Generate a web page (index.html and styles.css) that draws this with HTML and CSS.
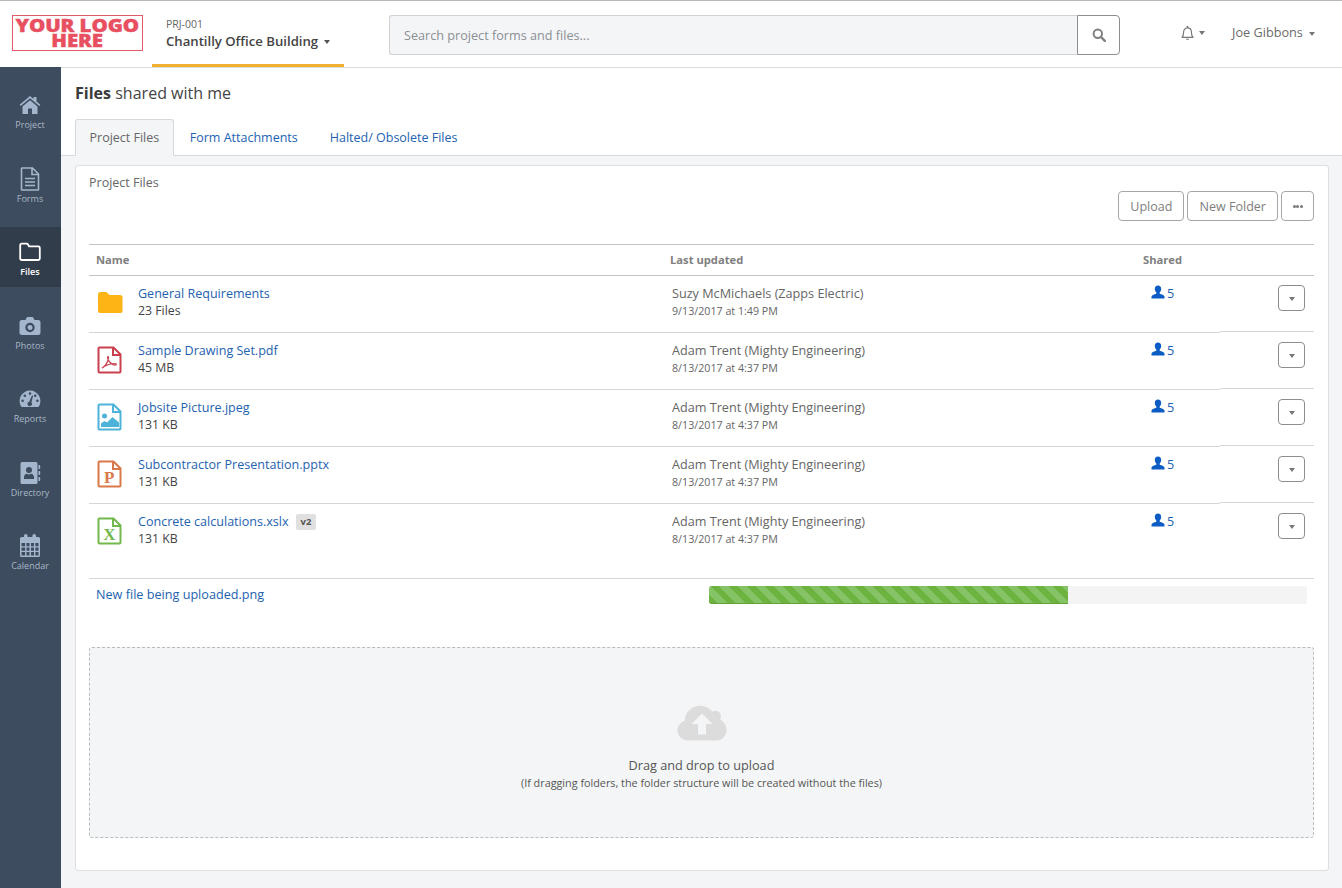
FILE: index.html
```html
<!DOCTYPE html>
<html lang="en">
<head>
<meta charset="utf-8">
<title>Files shared with me</title>
<link rel="stylesheet" href="styles.css">
</head>
<body>
<header class="topbar">
  <div class="logo"><div class="logo-text">YOUR LOGO<br>HERE</div></div>
  <div class="project">
    <div class="project-id">PRJ-001</div>
    <div class="project-name">Chantilly Office Building <i class="caret dark"></i></div>
  </div>
  <div class="search">
    <div class="search-input">Search project forms and files...</div>
    <div class="search-btn">
      <svg class="ic-search" viewBox="0 0 14 14"><circle cx="5.8" cy="5.8" r="4.2" fill="none" stroke="#808080" stroke-width="2"/><path d="M9 9l3.8 3.8" stroke="#808080" stroke-width="2.4" stroke-linecap="round"/></svg>
    </div>
  </div>
  <div class="bell">
    <svg class="ic-bell" viewBox="0 0 14 15"><path d="M1.800 11.600c.9-1 1.500-2.200 1.500-4.600 0-2.400 1.500-4.300 3.700-4.300s3.700 1.900 3.700 4.300c0 2.400.6 3.600 1.500 4.600z" fill="none" stroke="#777" stroke-width="1.100" stroke-linejoin="round"/><path d="M5.400 12.800a1.700 1.700 0 0 0 3.200 0z" fill="#777"/><circle cx="7" cy="1.700" r=".9" fill="#777"/></svg>
    <i class="caret"></i>
  </div>
  <div class="user">Joe Gibbons <i class="caret"></i></div>
</header>

<div class="app">
  <nav class="sidebar">
    <a class="nav-item">
      <svg class="nav-ic" viewBox="0 0 22 20"><path d="M11 1 .6 9.800l1.100 1.300L11 3.300l9.300 7.800 1.100-1.300L17.500 6.500V2h-3v2z"/><path d="M3.500 11.500 11 5.200l7.500 6.300V19h-5.500v-5.500H9V19H3.500z"/></svg>
      <span>Project</span>
    </a>
    <a class="nav-item">
      <svg class="nav-ic tall" viewBox="0 0 20 24"><path class="ln" d="M2 1h10.500L18.500 7v15.500a.5.500 0 0 1-.5.500H2a.5.500 0 0 1-.5-.5V1.500A.5.500 0 0 1 2 1zM12 1v6.500h6.500M5 11.500h10M5 15h10M5 18.500h10"/></svg>
      <span>Forms</span>
    </a>
    <a class="nav-item active">
      <svg class="nav-ic" viewBox="0 0 22 20"><path class="ln" d="M1.200 5V3.200a1.500 1.500 0 0 1 1.500-1.500h5a1.500 1.500 0 0 1 1.300.8l1 1.800h9.300a1.500 1.500 0 0 1 1.500 1.500v10.700a1.500 1.500 0 0 1-1.500 1.500H2.700a1.500 1.500 0 0 1-1.500-1.500z"/></svg>
      <span>Files</span>
    </a>
    <a class="nav-item">
      <svg class="nav-ic" viewBox="0 0 22 20"><path fill-rule="evenodd" d="M3 4h3.500l1.200-2.500a1 1 0 0 1 .9-.5h4.800a1 1 0 0 1 .9.500L15.500 4H19a2.500 2.500 0 0 1 2.500 2.500v10A2.500 2.500 0 0 1 19 19H3a2.500 2.500 0 0 1-2.500-2.500v-10A2.500 2.500 0 0 1 3 4zm8 2.800a4.700 4.700 0 1 0 0 9.400 4.700 4.700 0 0 0 0-9.400zm0 2.200a2.500 2.500 0 1 1 0 5 2.500 2.500 0 0 1 0-5z"/></svg>
      <span>Photos</span>
    </a>
    <a class="nav-item">
      <svg class="nav-ic" viewBox="0 0 22 20"><path fill-rule="evenodd" d="M11 1.500a10.500 10.500 0 0 1 9 15.800 1.200 1.200 0 0 1-1 .7H3a1.200 1.200 0 0 1-1-.7A10.500 10.500 0 0 1 11 1.500zM11 3.300a1.300 1.300 0 1 0 0 2.600 1.300 1.300 0 0 0 0-2.600zM5.800 5.500a1.300 1.300 0 1 0 0 2.600 1.300 1.300 0 0 0 0-2.600zM3.600 10.500a1.300 1.300 0 1 0 0 2.600 1.300 1.300 0 0 0 0-2.600zM18.400 10.500a1.300 1.300 0 1 0 0 2.600 1.300 1.300 0 0 0 0-2.600zM16.200 5.500a1.300 1.300 0 1 0 0 2.600 1.300 1.300 0 0 0 0-2.600zM13 6.500l-2.800 6.300a2.200 2.200 0 1 0 2.200.7l1.700-6.700z"/></svg>
      <span>Reports</span>
    </a>
    <a class="nav-item">
      <svg class="nav-ic tall" viewBox="0 0 22 24"><path fill-rule="evenodd" d="M3 1h14a1.500 1.500 0 0 1 1.500 1.500v19A1.500 1.500 0 0 1 17 23H3a1.500 1.500 0 0 1-1.500-1.500v-19A1.500 1.500 0 0 1 3 1zm7 5a3 3 0 1 0 0 6 3 3 0 0 0 0-6zm-5 12h10v-1.800c0-2-1.500-3.400-3-3.400-.7.400-1.300.600-2 .600s-1.300-.200-2-.600c-1.500 0-3 1.400-3 3.400z"/><path d="M19.500 4h1a.7.700 0 0 1 .7.700v2.600a.7.700 0 0 1-.7.700h-1zM19.500 10h1a.7.700 0 0 1 .7.700v2.600a.7.700 0 0 1-.7.700h-1zM19.500 16h1a.7.700 0 0 1 .7.700v2.600a.7.700 0 0 1-.7.700h-1z"/></svg>
      <span>Directory</span>
    </a>
    <a class="nav-item">
      <svg class="nav-ic tall" viewBox="0 0 22 24"><path fill-rule="evenodd" d="M2.500 3H5V1.800a1.800 1.800 0 0 1 3.600 0V3h4.800V1.800a1.800 1.800 0 0 1 3.600 0V3h2.500A1.500 1.500 0 0 1 21 4.500v17a1.500 1.500 0 0 1-1.500 1.500h-17A1.500 1.500 0 0 1 1 21.500v-17A1.500 1.500 0 0 1 2.500 3zM2.500 9v3.200h3.600V9zm5 0v3.200h3V9zm4.500 0v3.200h3V9zm4.400 0v3.200h3.100V9zM2.500 13.500v3.200h3.600v-3.200zm5 0v3.200h3v-3.200zm4.500 0v3.200h3v-3.200zm4.400 0v3.200h3.100v-3.200zM2.500 18v3.500h3.600V18zm5 0v3.500h3V18zm4.500 0v3.500h3V18zm4.400 0v3.500h3.100V18z"/></svg>
      <span>Calendar</span>
    </a>
  </nav>

  <main class="main">
    <div class="page-head">
      <h1 class="title"><b>Files</b> shared with me</h1>
      <div class="tabs">
        <a class="tab active">Project Files</a>
        <a class="tab">Form Attachments</a>
        <a class="tab">Halted/ Obsolete Files</a>
      </div>
    </div>
    <div class="content">
      <section class="panel">
        <div class="panel-title">Project Files</div>
        <div class="toolbar">
          <button class="btn">Upload</button>
          <button class="btn">New Folder</button>
          <button class="btn btn-more"><i></i><i></i><i></i></button>
        </div>

        <div class="row head">
          <div class="c-name">Name</div>
          <div class="c-upd">Last updated</div>
          <div class="c-shared">Shared</div>
          <div class="c-act"></div>
        </div>

        <div class="row">
          <div class="c-name">
            <svg class="f-ic" viewBox="0 0 26 28"><path fill="#fdb515" d="M1 5.500A2.500 2.500 0 0 1 3.500 3h6l3 3H23a2.500 2.500 0 0 1 2.500 2.500V22a2 2 0 0 1-2 2H3a2 2 0 0 1-2-2z"/></svg>
            <div><a class="link">General Requirements</a><div class="sub">23 Files</div></div>
          </div>
          <div class="c-upd"><div class="who">Suzy McMichaels (Zapps Electric)</div><div class="when">9/13/2017 at 1:49 PM</div></div>
          <div class="c-shared"><a class="share"><svg class="ic-user" viewBox="0 0 14 14"><path d="M7 .5c2 0 3.200 1.500 3.200 3.500 0 1.500-.7 2.800-1.500 3.500v1.200c1.800.6 4.300 1.500 4.800 2.700v2H.5v-2c.5-1.200 3-2.100 4.800-2.700V7.500C4.500 6.800 3.800 5.500 3.800 4 3.800 2 5 .5 7 .5z"/></svg>5</a></div>
          <div class="c-act"><button class="btn-drop"><i class="caret"></i></button></div>
        </div>

        <div class="row">
          <div class="c-name">
            <svg class="f-ic" viewBox="0 0 26 28"><path d="M2.500 1.500h14l7 7v17a1 1 0 0 1-1 1h-20a1 1 0 0 1-1-1v-23a1 1 0 0 1 1-1zM16 1.500V9h7.500" fill="none" stroke="#c9404f" stroke-width="2"/><path d="M5 22c3-1.500 5.500-5.500 6.500-9.500.3-1.300-.3-2.200-.8-1.800-.6.500 0 3 2 5.300 2 2.300 4.500 3.300 6 3 1.200-.3.700-1.500-.8-1.500-3 0-7.500 1-10.500 2.800-1.700 1-2.600 1.900-1.900 1.700z" fill="none" stroke="#c9404f" stroke-width="1.200"/></svg>
            <div><a class="link">Sample Drawing Set.pdf</a><div class="sub">45 MB</div></div>
          </div>
          <div class="c-upd"><div class="who">Adam Trent (Mighty Engineering)</div><div class="when">8/13/2017 at 4:37 PM</div></div>
          <div class="c-shared"><a class="share"><svg class="ic-user" viewBox="0 0 14 14"><path d="M7 .5c2 0 3.200 1.500 3.200 3.500 0 1.500-.7 2.800-1.500 3.500v1.200c1.800.6 4.300 1.500 4.800 2.700v2H.5v-2c.5-1.200 3-2.100 4.800-2.700V7.500C4.500 6.800 3.800 5.500 3.800 4 3.800 2 5 .5 7 .5z"/></svg>5</a></div>
          <div class="c-act"><button class="btn-drop"><i class="caret"></i></button></div>
        </div>

        <div class="row">
          <div class="c-name">
            <svg class="f-ic" viewBox="0 0 26 28"><path d="M2.500 1.500h14l7 7v17a1 1 0 0 1-1 1h-20a1 1 0 0 1-1-1v-23a1 1 0 0 1 1-1zM16 1.500V9h7.500" fill="none" stroke="#4eb3d8" stroke-width="2"/><circle cx="7.500" cy="13" r="2.500" fill="#4eb3d8"/><path d="M4 24v-3.500l3.500-2.500 2.500 1.500 5.500-5.500 6.500 5.500V24z" fill="#4eb3d8"/></svg>
            <div><a class="link">Jobsite Picture.jpeg</a><div class="sub">131 KB</div></div>
          </div>
          <div class="c-upd"><div class="who">Adam Trent (Mighty Engineering)</div><div class="when">8/13/2017 at 4:37 PM</div></div>
          <div class="c-shared"><a class="share"><svg class="ic-user" viewBox="0 0 14 14"><path d="M7 .5c2 0 3.200 1.500 3.200 3.500 0 1.500-.7 2.800-1.500 3.500v1.200c1.800.6 4.300 1.500 4.800 2.700v2H.5v-2c.5-1.200 3-2.100 4.800-2.700V7.500C4.500 6.800 3.800 5.500 3.800 4 3.800 2 5 .5 7 .5z"/></svg>5</a></div>
          <div class="c-act"><button class="btn-drop"><i class="caret"></i></button></div>
        </div>

        <div class="row">
          <div class="c-name">
            <svg class="f-ic" viewBox="0 0 26 28"><path d="M2.500 1.500h14l7 7v17a1 1 0 0 1-1 1h-20a1 1 0 0 1-1-1v-23a1 1 0 0 1 1-1zM16 1.500V9h7.500" fill="none" stroke="#d9794a" stroke-width="2"/><text x="12.300" y="23" class="f-letter" fill="#d9794a">P</text></svg>
            <div><a class="link">Subcontractor Presentation.pptx</a><div class="sub">131 KB</div></div>
          </div>
          <div class="c-upd"><div class="who">Adam Trent (Mighty Engineering)</div><div class="when">8/13/2017 at 4:37 PM</div></div>
          <div class="c-shared"><a class="share"><svg class="ic-user" viewBox="0 0 14 14"><path d="M7 .5c2 0 3.200 1.500 3.200 3.500 0 1.500-.7 2.800-1.500 3.500v1.200c1.800.6 4.300 1.500 4.800 2.700v2H.5v-2c.5-1.200 3-2.100 4.800-2.700V7.500C4.500 6.800 3.800 5.500 3.800 4 3.800 2 5 .5 7 .5z"/></svg>5</a></div>
          <div class="c-act"><button class="btn-drop"><i class="caret"></i></button></div>
        </div>

        <div class="row last">
          <div class="c-name">
            <svg class="f-ic" viewBox="0 0 26 28"><path d="M2.500 1.500h14l7 7v17a1 1 0 0 1-1 1h-20a1 1 0 0 1-1-1v-23a1 1 0 0 1 1-1zM16 1.500V9h7.500" fill="none" stroke="#72b84c" stroke-width="2"/><text x="12.300" y="23" class="f-letter" fill="#72b84c">X</text></svg>
            <div><a class="link">Concrete calculations.xslx</a><span class="badge">v2</span><div class="sub">131 KB</div></div>
          </div>
          <div class="c-upd"><div class="who">Adam Trent (Mighty Engineering)</div><div class="when">8/13/2017 at 4:37 PM</div></div>
          <div class="c-shared"><a class="share"><svg class="ic-user" viewBox="0 0 14 14"><path d="M7 .5c2 0 3.200 1.500 3.200 3.500 0 1.500-.7 2.800-1.500 3.500v1.200c1.800.6 4.300 1.500 4.800 2.700v2H.5v-2c.5-1.200 3-2.100 4.800-2.700V7.500C4.500 6.800 3.800 5.500 3.800 4 3.800 2 5 .5 7 .5z"/></svg>5</a></div>
          <div class="c-act"><button class="btn-drop"><i class="caret"></i></button></div>
        </div>

        <div class="upload-row">
          <a class="link upload-link">New file being uploaded.png</a>
          <div class="progress"><div class="progress-fill" style="width:60%"></div></div>
        </div>

        <div class="dropzone">
          <svg class="ic-cloud" viewBox="0 0 50 36"><path fill-rule="evenodd" d="M11 35.500C5 35.500.5 31 .5 25.500c0-4.500 3-8.500 7.300-9.800C8 7 15 .8 23 .8c5 0 9.500 2.300 12.300 6 .9-.7 2-1 3.200-1 3 0 5.500 2.500 5.500 5.500 0 1.200-.4 2.300-1 3.200 3.900 1.800 6.500 6 6.500 10.500 0 5.800-4.500 10.500-10 10.500zM25 8.500 14.500 19h6.500v10.500h8V19h6.500z"/></svg>
          <div class="drop-main">Drag and drop to upload</div>
          <div class="drop-sub">(If dragging folders, the folder structure will be created without the files)</div>
        </div>
      </section>
    </div>
  </main>
</div>
</body>
</html>
```

FILE: styles.css
```css
* { box-sizing: border-box; }
html, body { margin: 0; padding: 0; }
body {
  width: 1342px;
  height: 888px;
  overflow: hidden;
  font-family: "Open Sans", sans-serif;
  font-size: 12.65px;
  color: #444;
  background: #fff;
}
.caret {
  display: inline-block;
  width: 0;
  height: 0;
  border-left: 3.5px solid transparent;
  border-right: 3.5px solid transparent;
  border-top: 4px solid #777;
  vertical-align: middle;
}
.caret.dark { border-top-color: #555; margin-left: 2px; }

/* top bar */
.topbar {
  height: 67px;
  border-top: 1px solid #b8b8b8;
  display: flex;
  align-items: flex-start;
  background: #fff;
}
.logo {
  width: 131px;
  height: 36px;
  margin: 14px 0 0 12px;
  border: 1px solid #e2596a;
  color: #e84f60;
  display: flex;
  align-items: center;
  justify-content: center;
}
.logo-text {
  font-family: "Open Sans", sans-serif;
  font-weight: 800;
  font-size: 18px;
  line-height: 15.5px;
  letter-spacing: -.1px;
  text-align: center;
  white-space: nowrap;
  transform: scaleX(1.14);
  -webkit-text-stroke: .4px #e84f60;
}
.project {
  width: 192px;
  height: 66px;
  margin-left: 9px;
  padding: 15px 0 0 14px;
  border-bottom: 3px solid #f0b02e;
}
.project-id { font-size: 10.5px; line-height: 16px; color: #666; }
.project-name { font-size: 13.15px; line-height: 18px; font-weight: 600; color: #444; }
.search { display: flex; width: 731px; height: 40px; margin: 14px 0 0 45px; }
.search-input {
  flex: 1;
  background: #f4f5f7;
  border: 1px solid #d0d2d5;
  border-right: 0;
  border-radius: 3px 0 0 3px;
  padding-left: 14px;
  font-size: 12.65px;
  line-height: 39px;
  color: #8b8f94;
}
.search-btn {
  width: 43px;
  border: 1px solid #8d8d8d;
  border-radius: 0 4px 4px 0;
  display: flex;
  align-items: center;
  justify-content: center;
}
.ic-search { width: 14px; height: 14px; }
.bell { display: flex; align-items: center; gap: 4px; margin: 23px 0 0 60px; height: 17px; }
.ic-bell { width: 15px; height: 16px; }
.user { margin: 23px 0 0 27px; font-size: 12.7px; line-height: 17px; color: #6b6b6b; }
.user .caret { margin-left: 3px; }

/* layout */
.app { display: flex; height: 821px; }
.sidebar {
  width: 61px;
  flex: none;
  background: #3d4c5e;
  padding: 13px 1px 0 0;
  display: flex;
  flex-direction: column;
  gap: 13.5px;
}
.nav-item {
  height: 60px;
  display: flex;
  flex-direction: column;
  align-items: center;
  padding-top: 15px;
  color: #a9b7c7;
  font-size: 9px;
  line-height: 14px;
}
.nav-item span { margin-top: auto; margin-bottom: 8px; }
.nav-ic { width: 22px; height: 20px; fill: #a3b6cc; }
.nav-ic.tall { height: 24px; margin-top: -2px; }
.nav-ic .ln { fill: none; stroke: #a3b6cc; stroke-width: 1.600; }
.nav-item.active { background: #323d4c; color: #fff; font-weight: 600; position: relative; }
.nav-item.active::after { content: ""; position: absolute; top: 0; bottom: 0; right: -1px; width: 1px; background: #323d4c; }
.nav-item.active .ln { stroke: #fff; stroke-width: 1.800; }
.main { flex: 1; display: flex; flex-direction: column; min-width: 0; }
.page-head { height: 89px; border-top: 1px solid #dcdcdc; border-bottom: 1px solid #d6d8da; padding: 0 0 0 14px; display: flex; flex-direction: column; }
.title { margin: 14px 0 0; font-size: 16.05px; line-height: 22px; font-weight: 400; color: #444; }
.title b { font-weight: 700; color: #3a3a3a; }
.tabs { display: flex; margin-top: 15px; margin-bottom: -1px; }
.tab {
  height: 37px;
  padding: 0 15px;
  font-size: 12.5px;
  line-height: 35px;
  color: #1e62b0;
  border: 1px solid transparent;
}
.tab.active {
  color: #666;
  background: #f4f5f7;
  border-color: #d6d8da #d6d8da #f4f5f7;
  border-radius: 3px 3px 0 0;
  padding: 0 13.5px;
}
.content { flex: 1; background: #f4f5f7; padding: 9px 13px 18px 14px; }
.panel {
  height: 706px;
  background: #fff;
  border: 1px solid #dddfe2;
  border-radius: 3px;
  padding: 8px 14px 0 13px;
}
.panel-title { font-size: 12.5px; line-height: 18px; color: #666; }
.toolbar { display: flex; justify-content: flex-end; gap: 3px; margin-top: -1px; }
.btn {
  height: 30px;
  padding: 0 11px;
  font: 400 12.55px "Open Sans", sans-serif;
  color: #7e7e7e;
  background: #fff;
  border: 1px solid #a6a6a6;
  border-radius: 4px;
}
.btn-more { width: 33px; padding: 0; display: flex; align-items: center; justify-content: center; gap: .5px; }
.btn-more i { width: 3px; height: 3px; background: #777; border-radius: 50%; }

/* table */
.row { display: flex; height: 57px; }
.row > div { border-bottom: 1px solid #d6d6d6; }
.row.head { height: 32px; margin-top: 23px; border-top: 1px solid #c4c4c4; font-size: 11.2px; font-weight: 700; color: #808080; line-height: 30px; }
.row.head > div { border-bottom-color: #c4c4c4; }
.row.last > div { border-bottom: 0; }
.c-name { width: 581px; display: flex; align-items: flex-start; padding-left: 8px; }
.c-upd { width: 473px; padding-left: 2px; }
.c-shared { width: 77px; padding-left: 8px; }
.c-act { flex: 1; display: flex; justify-content: flex-end; padding-right: 9px; margin-bottom: 1px; }
.row.head .c-act { margin-bottom: 0; }
.row.head .c-upd { padding-left: 0; }
.row.head .c-name { padding-left: 7px; }
.row.head .c-shared { padding-left: 0; }
.f-ic { width: 26px; height: 28px; margin: 13px 15px 0 0; flex: none; }
.f-letter { font: 700 17px "Liberation Serif", serif; text-anchor: middle; }
.c-name > div { padding-top: 8px; }
.link { color: #1e62b0; font-size: 12.55px; line-height: 17px; }
.upload-link { font-size: 12.65px; }
.sub { font-size: 12.3px; line-height: 17px; color: #444; }
.badge {
  display: inline-block;
  margin-left: 7px;
  padding: 0 5px;
  height: 16px;
  background: #e0e0e0;
  border-radius: 2px;
  font-size: 9.5px;
  font-weight: 700;
  line-height: 16px;
  color: #555;
  vertical-align: 1px;
}
.who { font-size: 12.65px; line-height: 17px; color: #666; margin-top: 9px; }
.when { font-size: 10.7px; line-height: 15px; color: #666; margin-top: 2px; }
.share { display: flex; align-items: flex-start; gap: 2px; color: #1e62b0; font-size: 12.65px; line-height: 17px; margin-top: 9px; }
.ic-user { width: 14px; height: 14px; fill: #0b5cc4; }
.btn-drop {
  width: 27px;
  height: 26px;
  margin-top: 9px;
  background: #fff;
  border: 1px solid #8d8d8d;
  border-radius: 4px;
  padding: 0;
}

/* upload */
.upload-row { display: flex; border-top: 1px solid #d6d6d6; margin-top: 17px; padding: 7px 7px 0 7px; height: 69px; }
.upload-row .link { width: 613px; line-height: 17px; }
.progress { width: 598px; height: 18px; background: #f4f4f4; border-radius: 2px; overflow: hidden; }
.progress-fill {
  height: 18px;
  border-bottom: 1px solid #5fa436;
  border-radius: 2px 0 0 2px;
  background: repeating-linear-gradient(45deg, #6db33f 0 6.360px, #86c266 6.360px 12.730px);
}
.dropzone {
  height: 191px;
  background: #f4f5f7;
  border: 1px dashed #bcbcbc;
  border-radius: 3px;
  display: flex;
  flex-direction: column;
  align-items: center;
  padding-top: 57px;
}
.ic-cloud { width: 50px; height: 36px; fill: #dcdcdc; }
.drop-main { font-size: 12.7px; line-height: 17px; color: #555; margin-top: 16px; }
.drop-sub { font-size: 10.8px; line-height: 14px; color: #555; margin-top: 2px; }
```
